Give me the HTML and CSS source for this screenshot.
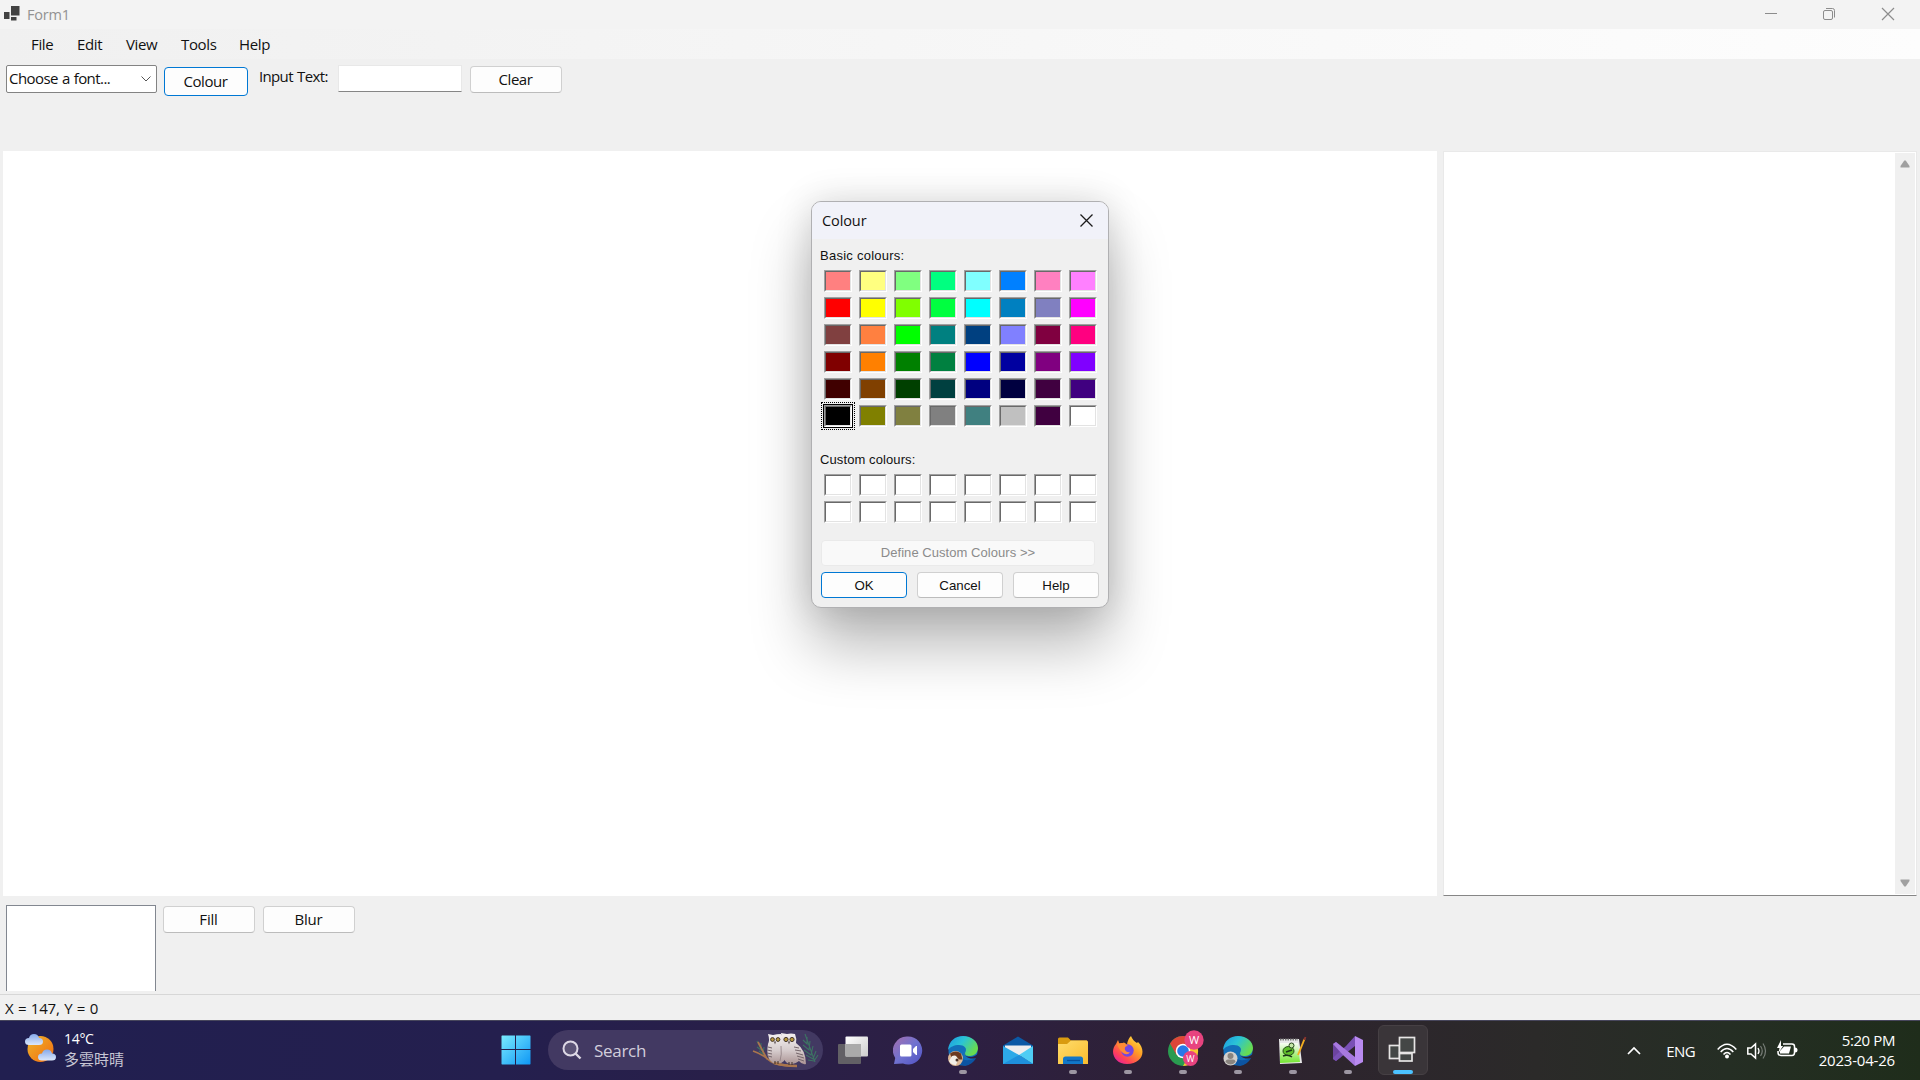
FILE: index.html
```html
<!DOCTYPE html>
<html lang="en">
<head>
<meta charset="utf-8">
<title>Form1</title>
<link rel="stylesheet" href="styles.css">
</head>
<body>
<div class="window">
  <header class="titlebar">
    <svg class="app-icon" width="16" height="17" viewBox="0 0 16 17"><g fill="#424242"><rect x="7" y="0" width="8.5" height="9.5"/><rect x="0" y="6" width="5.5" height="7"/><rect x="7" y="11" width="5.5" height="3.5"/></g></svg>
    <span class="title">Form1</span>
    <div class="caption-buttons">
      <svg width="58" height="29" viewBox="0 0 58 29"><path d="M23 13.5h12" stroke="#8c8c8c"/></svg>
      <svg width="58" height="29" viewBox="0 0 58 29"><g fill="none" stroke="#8c8c8c"><rect x="23.5" y="10.5" width="9" height="9" rx="1.5"/><path d="M26 8.5h6.500q2 0 2 2v7"/></g></svg>
      <svg width="60" height="29" viewBox="0 0 60 29"><path d="M24 8l12 12M36 8l-12 12" stroke="#8c8c8c" stroke-width="1.2"/></svg>
    </div>
  </header>
  <nav class="menubar"><span>File</span><span>Edit</span><span>View</span><span>Tools</span><span>Help</span></nav>
  <section class="toolbar">
    <div class="combo"><span>Choose a font...</span><svg width="10" height="6" viewBox="0 0 10 6"><path d="M.5.5 5 5 9.500.5" fill="none" stroke="#555"/></svg></div>
    <button class="btn focus colour-btn">Colour</button>
    <label class="input-label">Input Text:</label>
    <div class="text-input"></div>
    <button class="btn clear-btn">Clear</button>
  </section>
  <main class="work">
    <div class="canvas"></div>
    <div class="output">
      <div class="scrollbar">
        <svg width="10" height="8" viewBox="0 0 10 8"><path d="M4.300.5h1.400L9.500 6v1.500h-9V6z" fill="#a0a0a0"/></svg>
        <svg width="10" height="8" viewBox="0 0 10 8"><path d="M.5.500h9V2L5.700 7.500H4.300L.5 2z" fill="#a0a0a0"/></svg>
      </div>
    </div>
  </main>
  <section class="bottom">
    <div class="preview"></div>
    <button class="btn">Fill</button>
    <button class="btn">Blur</button>
  </section>
  <footer class="status"><span>X = 147, Y = 0</span></footer>
</div>

<div class="taskbar">
  <div class="weather">
    <svg width="31" height="30" viewBox="0 0 31 30"><defs><linearGradient id="sun" x1="0" y1="0" x2="1" y2="1"><stop stop-color="#eeb62b"/><stop offset="1" stop-color="#f26a10"/></linearGradient><linearGradient id="cl" x2="0" y2="1"><stop stop-color="#86a9ea"/><stop offset="1" stop-color="#dce8fb"/></linearGradient></defs><circle cx="15.500" cy="16" r="13" fill="url(#sun)"/><path d="M4 12q-4 0-4-3.500Q0 5 4 5 5 1 9 1t5 4q4 0 4 3.500T14 12z" fill="url(#cl)"/><path transform="translate(13 15.500)" d="M4 12q-4 0-4-3.500Q0 5 4 5 5 1 9 1t5 4q4 0 4 3.500T14 12z" fill="url(#cl)"/></svg>
    <div class="weather-text"><span class="temp">14°C</span><span class="cond">多雲時晴</span></div>
  </div>
  <div class="apps">
    <svg class="start" width="30" height="30" viewBox="0 0 30 30"><defs><linearGradient id="win" gradientUnits="userSpaceOnUse" x2="29" y2="29"><stop stop-color="#7cecff"/><stop offset="1" stop-color="#1098f5"/></linearGradient></defs><path fill="url(#win)" d="M1 .5h13V14H.5V1zM15 .5h14l.5.500V14H15zM.5 15H14v14.500H1L.5 29zM15 15h14.500v14l-.5.500H15z"/></svg>
    <div class="search">
      <svg width="20" height="20" viewBox="0 0 20 20"><circle cx="8.500" cy="8.500" r="7" fill="#ffffff22" stroke="#ddd8e5" stroke-width="2"/><path d="M13.500 13.500l5 5" stroke="#ddd8e5" stroke-width="2.400"/></svg>
      <span>Search</span>
      <svg class="owls" width="68" height="36" viewBox="0 0 68 36">
        <defs><linearGradient id="owl" x2="0" y2="1"><stop stop-color="#f4f1f1"/><stop offset=".55" stop-color="#d6cccd"/><stop offset="1" stop-color="#ab9494"/></linearGradient></defs>
        <g fill="none" stroke="#3d7263" stroke-width="1.100"><path d="M53 2l10 28M51 8l4 4 0-7M51 13l6 5 1-9M52 18l7 5 2-9M54 23l7 4 3-8M56 28l6 1 4-6M5 9l9 17M5 15l4 3 0-7M7 19l4 3 1-7"/></g>
        <path d="M1 19q9 3 16 9t28 6M6 10l9 17" fill="none" stroke="#a9754d" stroke-width="1.800"/>
        <path d="M16 2l5 1q4-1 8-1l3 5v22q-5 5-11 2-8-5-5-19 2-4 0-10z" fill="url(#owl)"/>
        <path d="M29 1l6 1q4-1 8 0 2 5 1 9 10 7 10 21-4 1-7-3-6 5-12 2-6-5-6-13 2-8 0-17z" fill="url(#owl)"/>
        <path d="M29 14q1 9-1 15" fill="none" stroke="#8d7c80" stroke-width=".8"/>
        <g fill="#b89a3c" stroke="#45362d" stroke-width="1"><circle cx="20.500" cy="7.500" r="1.900"/><circle cx="26" cy="7.500" r="1.900"/><circle cx="34" cy="7.500" r="2.100"/><circle cx="40" cy="7.500" r="2.100"/></g>
        <path d="M22 9.500h2l-1 3zM36 9.500h2l-1 3z" fill="#4c4043"/>
        <path d="M16 15l4 1M15 18l5 1M15 21l5 1M16 24l4 1M42 15l5 1M43 18l6 1M44 21l7 2M45 24l7 2M46 27l6 2" stroke="#75666b" stroke-width="1"/>
        <path d="M22 31q10 3 23 3" stroke="#a9754d" stroke-width="2.600" fill="none"/>
        <path d="M23 29v3M26 29v3M37 30v3M40 30v3" stroke="#3e302c"/>
      </svg>
    </div>
    <div class="app"><svg width="30" height="30" viewBox="0 0 30 30"><defs><linearGradient id="tv" x2="1" y2="1"><stop stop-color="#fff"/><stop offset="1" stop-color="#ccc"/></linearGradient></defs><rect y="8" width="23" height="20" rx="1" fill="#626065"/><rect x="7.500" y=".5" width="22.500" height="20" rx="1" fill="url(#tv)"/><path d="M7.500 8H23v12.500H7.500z" fill="#aaa"/></svg></div>
    <div class="app"><svg width="30" height="30" viewBox="0 0 30 30"><defs><linearGradient id="chat" x2="1" y2="1"><stop stop-color="#a66eac"/><stop offset=".5" stop-color="#7072d0"/><stop offset="1" stop-color="#4f50c2"/></linearGradient></defs><path d="M15 .5a14 14 0 1 1-5 27L1 28l1.200-6A14 14 0 0 1 15 .5z" fill="url(#chat)"/><rect x="7" y="8.500" width="11.500" height="12" rx="1.500" fill="#fff"/><path d="M20 13l3-3h1v9h-1l-3-3z" fill="#fff"/></svg></div>
    <div class="app run"><svg width="30" height="30" viewBox="0 0 30 30"><defs><linearGradient id="eg" x2="1" y2=".5"><stop stop-color="#1b96e3"/><stop offset=".5" stop-color="#2bc4d5"/><stop offset="1" stop-color="#68dc50"/></linearGradient></defs><circle cx="15" cy="15" r="14.500" fill="#136fba"/><path d="M0 14C1 5 7 0 15 0c9 0 15 6 15 12 0 5-4 8-8 8-4 0-6-1-5-3 3-5-1-8-6-8-5 0-9 2-11 5z" fill="url(#eg)"/><path d="M10 15c0 8 7 12 18 7-2 4-6 7-11 8-8-2-12-9-7-15z" fill="#0c54a2"/><path d="M17 17q-1 4 6 4 3 0 8-4v5l-3 0q-4 1-7 0-4-1-4-5z" fill="#2d1f43"/><circle cx="7.500" cy="22.500" r="7.500" fill="#dcb795"/><path d="M2 17.500q6-4 11 0l1.500 6-3 0-4-3-4 1z" fill="#6b3a20"/><path d="M4 20q5-2 6 4l-2 5q-5 0-7-4z" fill="#f2eee7"/><circle cx="9" cy="24" r="1.500" fill="#4d3328"/></svg></div>
    <div class="app"><svg width="30" height="30" viewBox="0 0 30 30"><path d="M0 9.500L15 .5l15 9v6H0z" fill="#0b59a5"/><path d="M2 9.500h26v10H2z" fill="#eee"/><path d="M0 10l16 9L30 28H0z" fill="#2daae8"/><path d="M30 10L16 19l14 9z" fill="#4fcdf4"/><path d="M0 28l16-9 14 9z" fill="#1f90dc"/></svg></div>
    <div class="app run"><svg width="30" height="30" viewBox="0 0 30 30"><defs><linearGradient id="fold" x2="1" y2="1"><stop stop-color="#ffdc6c"/><stop offset="1" stop-color="#f9bc2e"/></linearGradient></defs><path d="M0 3q0-1.500 1.500-1.500H10l3 3h16V16H0z" fill="#d99b10"/><path d="M0 8h9l4-3.500h15.500Q30 4.500 30 6v22H0z" fill="url(#fold)"/><path d="M5 28v-5q0-2.500 2.500-2.500h15Q25 20.500 25 23v5z" fill="#1277c8"/><path d="M9 24.500h13" stroke="#07509b" stroke-width="1.300"/></svg></div>
    <div class="app run"><svg width="30" height="30" viewBox="0 0 30 30"><defs><linearGradient id="fx" x1="1" y1="0" x2=".2" y2="1"><stop stop-color="#fff14c"/><stop offset=".45" stop-color="#ff9b25"/><stop offset=".8" stop-color="#ff405a"/><stop offset="1" stop-color="#e4239b"/></linearGradient></defs><path d="M5 4l1.500 4L11 6.500l3 2q1-6 4-8.500 2 5 6 7l1-1c9 9 4 22-11 22C2 28-4 16 3 8z" fill="url(#fx)"/><circle cx="14.500" cy="14.500" r="6.200" fill="#7446e0"/><path d="M4 8q7-3 11 2-4 0-3 4 2 3 5 2-2 4-7 1-4-3-6-9z" fill="#ff8a36"/></svg></div>
    <div class="app run"><svg class="wide" width="36" height="36" viewBox="0 0 36 36"><circle cx="15" cy="21" r="15" fill="#2a9b50"/><path d="M2 13.500A15 15 0 0 1 28 13.500L15 14.500 8.500 25z" fill="#de4638"/><path d="M28 13.500A15 15 0 0 1 15 36l6.500-11L20 14z" fill="#f9c82e"/><circle cx="15" cy="21" r="7.300" fill="#fff"/><circle cx="15" cy="21" r="5.800" fill="#2878e8"/><circle cx="26" cy="10" r="9.700" fill="#e8437f"/><circle cx="22.500" cy="28.500" r="7.500" fill="#e8437f"/><text x="26" y="14" font-size="11" text-anchor="middle" fill="#fff">W</text><text x="22.500" y="32" font-size="9" text-anchor="middle" fill="#fff">W</text></svg></div>
    <div class="app run"><svg width="30" height="30" viewBox="0 0 30 30"><circle cx="15" cy="15" r="14.500" fill="#136fba"/><path d="M0 14C1 5 7 0 15 0c9 0 15 6 15 12 0 5-4 8-8 8-4 0-6-1-5-3 3-5-1-8-6-8-5 0-9 2-11 5z" fill="url(#eg)"/><path d="M10 15c0 8 7 12 18 7-2 4-6 7-11 8-8-2-12-9-7-15z" fill="#0c54a2"/><path d="M17 17q-1 4 6 4 3 0 8-4v5l-3 0q-4 1-7 0-4-1-4-5z" fill="#2f2332"/><circle cx="7.500" cy="22.500" r="7" fill="#d1cfcd"/><circle cx="7.500" cy="20" r="3" fill="#89847f"/><path d="M2.500 26q0-2.500 2.500-2.500h5q2.500 0 2.500 2.500-5 5-10 0z" fill="#89847f"/></svg></div>
    <div class="app run"><svg width="30" height="30" viewBox="0 0 30 30"><defs><linearGradient id="np" x2="0" y2="1"><stop stop-color="#f9fff4"/><stop offset="1" stop-color="#72e52f"/></linearGradient></defs><path d="M1 3h20l3 24-22 1z" fill="#e8e8e8"/><path d="M2 7h18l2 19-20 1z" fill="url(#np)"/><path d="M2 3.500h18" stroke="#777" stroke-width="2" stroke-dasharray="1.500 1"/><ellipse cx="10.500" cy="15" rx="5.500" ry="4.500" fill="#61be2c" stroke="#204a17"/><circle cx="13.500" cy="9.500" r="2.500" fill="#c5e8a8" stroke="#26451c"/><path d="M5 20q5-2 9 1M8 16l6-2" stroke="#1c3518" stroke-width="1.500" fill="none"/><path d="M20 19L26.500 3" stroke="#f3ae20" stroke-width="1.900"/><path d="M26.300 4l1.200-3" stroke="#8c3530" stroke-width="1.900"/></svg></div>
    <div class="app run"><svg width="30" height="30" viewBox="0 0 30 30"><path d="M0 8l3-2 5 4v11l-5 4-3-2z" fill="#6c44a0"/><path d="M22 0l-9 10-9 8-4 4v1l3 2 9-7 10-8z" fill="#7950b5"/><path d="M0 8l3-2 19 15v9L10 19z" fill="#a779df"/><path d="M22 0l8 4v22l-8 4z" fill="#b98af0"/></svg></div>
    <div class="app run active"><svg width="30" height="30" viewBox="0 0 30 30"><g fill="#444746" stroke="#e7e5e5" stroke-width="1.700"><rect x="1.500" y="9.500" width="10" height="13"/><rect x="11.500" y="17.500" width="12.500" height="7.500"/><rect x="11.500" y="1.500" width="15" height="15"/></g></svg></div>
  </div>
  <div class="tray">
    <svg width="14" height="9" viewBox="0 0 14 9"><path d="M1 8l6-6 6 6" fill="none" stroke="#fff" stroke-width="1.700"/></svg>
    <span class="lang">ENG</span>
    <svg width="20" height="16" viewBox="0 0 20 16"><g fill="none" stroke="#fff" stroke-width="1.500"><path d="M.7 6.500q9.300-10.500 18.600 0M3.700 9q6.300-7 12.600 0M6.500 11.500q3.500-4 7 0"/></g><circle cx="10" cy="13.500" r="2" fill="#fff"/></svg>
    <svg class="vol" width="20" height="18" viewBox="0 0 20 18"><path d="M.8 6H4l4.500-4v14L4 12H.8z" fill="none" stroke="#fff" stroke-width="1.500"/><path d="M11 6q2 3 0 6" fill="none" stroke="#fff" stroke-width="1.300"/><path d="M13.500 4q3.500 5 0 10M16 1.500q5 7.500 0 15" fill="none" stroke="#777d77" stroke-width="1.200"/></svg>
    <svg class="bat" width="21" height="18" viewBox="0 0 21 18"><path d="M6 4h9q2.500 0 2.500 2.500v6Q17.500 15.500 15 15.500H4q-3 0-3-3V11" fill="none" stroke="#fff" stroke-width="1.500"/><path d="M7 6.500h7L12 13.500H3V11zM18 7.500q2.500 0 2.500 2.500t-2.500 2.500zM4 0L0 8h2.500L1.500 13 6 6H4z" fill="#fff"/></svg>
    <div class="clock"><span>5:20 PM</span><span class="date">2023-04-26</span></div>
  </div>
</div>

<div class="dialog">
  <div class="dialog-title"><span>Colour</span><svg width="13" height="13" viewBox="0 0 13 13"><path d="M.5.500l12 12M12.500.5l-12 12" stroke="#1b1b1b" stroke-width="1.300"/></svg></div>
  <div class="dialog-body">
    <div class="group-label">Basic colours:</div>
    <div class="swatches" id="basic"></div>
    <div class="group-label custom-label">Custom colours:</div>
    <div class="swatches" id="custom"></div>
    <button class="btn define" disabled><span>Define Custom Colours &gt;&gt;</span></button>
    <div class="actions"><button class="btn focus">OK</button><button class="btn">Cancel</button><button class="btn">Help</button></div>
  </div>
</div>
<script src="palette.js"></script>
</body>
</html>
```
FILE: styles.css
```css
* { box-sizing: border-box; }
body { margin: 0; width: 1920px; height: 1080px; overflow: hidden; display: flex; flex-direction: column; font: 15px/20px "Open Sans", "Noto Sans", sans-serif; color: #111; background: #f0f0f0; }
svg { display: block; flex: none; }
span, label { white-space: nowrap; }
.window { height: 1020px; display: flex; flex-direction: column; }

.titlebar { height: 29px; flex: none; display: flex; align-items: flex-start; background: #f3f3f3; padding-left: 4px; }
.app-icon { margin-top: 6px; }
.title { margin: 5px 0 0 7px; color: #929292; font-size: 14.5px; letter-spacing: -.2px; }
.caption-buttons { margin-left: auto; padding-right: 2px; display: flex; }

.menubar { height: 30px; flex: none; display: grid; grid-template-columns: 46px 49px 55px 58px auto; align-items: center; padding: 0 0 1px 31px; letter-spacing: -.35px; background: linear-gradient(90deg, #f0f0f0, #fdfdfd); }

.toolbar { height: 92px; flex: none; display: flex; align-items: flex-start; padding: 6px 0 0 6px; letter-spacing: -.45px; }
.combo { width: 151px; height: 28px; display: flex; align-items: center; justify-content: space-between; padding: 0 5px 2px 2px; background: #fff; border: 1px solid #838383; border-radius: 2px; }
.combo span { word-spacing: .6px; letter-spacing: -.55px; }
.combo svg { margin-top: 2px; }
.btn { width: 92px; height: 27px; padding: 0 1px 2px 0; font: inherit; letter-spacing: inherit; color: #111; background: #fdfdfd; border: 1px solid #d0d0d0; border-bottom-color: #bcbcbc; border-radius: 4px; }
.btn.focus { border-color: #0078d4; }
.colour-btn { width: 84px; height: 29px; margin: 2px 0 0 7px; }
.input-label { margin: 1px 0 0 11px; width: 79px; letter-spacing: -.65px; word-spacing: 1px; }
.text-input { width: 124px; height: 27px; background: #fff; border: 1px solid #e8e8e8; border-bottom-color: #868686; }
.clear-btn { margin: 1px 0 0 8px; }

.work { height: 745px; flex: none; display: flex; padding-left: 3px; gap: 6px; }
.canvas { width: 1434px; background: #fff; }
.output { width: 474px; background: #fff; border: 1px solid #e9e9e9; border-bottom-color: #868686; display: flex; justify-content: flex-end; padding: 1px 1px 1px 0; }
.scrollbar { width: 20px; background: #f0f0f0; display: flex; flex-direction: column; align-items: center; justify-content: space-between; padding: 7px 1px 7px 0; }

.bottom { height: 98px; flex: none; display: flex; padding: 9px 0 0 6px; letter-spacing: -.2px; }
.bottom .btn { margin: 1px 0 0 8px; }
.preview { width: 150px; height: 86px; background: #fff; border: 1px solid #828790; border-bottom: 0; }
.bottom .preview + .btn { margin-left: 7px; }
.status { flex: 1; border-top: 1px solid #d7d7d7; padding: 3px 0 0 5px; }
.status span { letter-spacing: -.2px; word-spacing: .8px; }

.taskbar { position: relative; height: 60px; border-top: 1px solid #47465c; color: #fff; display: flex; background: linear-gradient(90deg, #211f50 0, #241f4e 26%, #2d1f43 50%, #2e2230 64%, #2b2a29 80%, #252e24 90%, #1f2d1b 100%); }
.weather { width: 501px; padding: 12px 0 0 25px; display: flex; gap: 8px; }
.weather-text { display: flex; flex-direction: column; margin-top: -4px; line-height: 20px; }
.temp { font-size: 14px; letter-spacing: -.3px; }
.cond { font: 15px/20px "Noto Sans CJK TC", sans-serif; color: #c7c6d4; }
.apps { display: flex; align-items: flex-start; }
.start { margin: 14px 18px 0 0; }
.search { width: 275px; height: 40px; margin: 9px 5px 0 -1px; border-radius: 20px; background: #423962; display: flex; align-items: center; padding-left: 14px; font-size: 17px; color: #d2cedc; }
.search span { margin: 1px 0 0 12px; letter-spacing: -.3px; }
.owls { margin-left: auto; margin-right: 3px; }
.app { position: relative; width: 50px; height: 50px; margin: 4px 5px 0 0; display: flex; justify-content: center; padding-top: 11px; border-radius: 6px; }
.app .wide { margin: -6px 0 0 6px; }
.run::after { content: ""; position: absolute; left: 21px; bottom: 1px; width: 8px; height: 4px; border-radius: 2px; background: #9c96a2; }
.active { background: #3a3539; border: 1px solid #464044; padding-top: 10px; }
.active::after { left: 14px; width: 20px; bottom: 0; background: #4cc2ff; }
.tray { margin-left: auto; padding-right: 25px; display: flex; align-items: center; }
.lang { margin: 0 22px 0 25px; font-size: 15px; letter-spacing: -.6px; }
.vol { margin: 0 10px; }
.bat { margin-top: -4px; }
.clock { width: 97px; margin-top: -2px; display: flex; flex-direction: column; text-align: right; font-size: 15px; line-height: 20px; letter-spacing: -.4px; }
.date { letter-spacing: -.2px; }

.dialog { position: absolute; left: 811px; top: 201px; width: 298px; height: 407px; background: #f0f0f0; border: 1px solid #b0b0b2; border-radius: 10px; box-shadow: 0 38px 60px rgba(0,0,0,.28), 0 0 36px rgba(0,0,0,.14); overflow: hidden; font-family: "Liberation Sans", Arial, sans-serif; font-size: 13px; line-height: 16px; }
.dialog-title { height: 37px; background: #f1f2f9; display: flex; justify-content: space-between; align-items: center; padding: 0 15px 1px 10px; font: 14.500px/20px "Open Sans", sans-serif; letter-spacing: -.1px; }
.dialog-title span { margin-top: 1px; }
.dialog-body { padding: 9px 0 0 8px; display: flex; flex-direction: column; align-items: flex-start; }
.group-label { height: 22px; letter-spacing: .25px; }
.swatches { display: grid; grid-template-columns: repeat(8, 28px); grid-auto-rows: 22px; gap: 5px 7px; margin-left: 4px; }
.swatch { border: 1px solid #a0a0a0; border-right-color: #fff; border-bottom-color: #fff; }
.swatch i { display: block; height: 100%; border: 1px solid #696969; border-right-color: #e3e3e3; border-bottom-color: #e3e3e3; }
.swatch.selected { box-shadow: 0 0 0 1px #000; outline: 1px dotted #000; outline-offset: 2px; }
.custom-label { margin-top: 25px; letter-spacing: .1px; }
.define { width: 274px; height: 26px; padding: 0; margin: 17px 0 0 1px; background: #f9f9f9; border-color: #eaeaea; color: #8b8b8b; letter-spacing: .05px; }
.actions { display: flex; gap: 10px; margin: 6px 0 0 1px; }
.actions .btn { width: 86px; height: 26px; padding: 1px 0 0; font-size: 13.300px; }
```
FILE: palette.js
```js
const basic = [
  "ff8080 ffff80 80ff80 00ff80 80ffff 0080ff ff80c0 ff80ff",
  "ff0000 ffff00 80ff00 00ff40 00ffff 0080c0 8080c0 ff00ff",
  "804040 ff8040 00ff00 008080 004080 8080ff 800040 ff0080",
  "800000 ff8000 008000 008040 0000ff 0000a0 800080 8000ff",
  "400000 804000 004000 004040 000080 000040 400040 400080",
  "000000 808000 808040 808080 408080 c0c0c0 400040 ffffff"
].join(" ").split(" ");
function fill(id, colours, selected) {
  document.getElementById(id).innerHTML = colours.map((c, i) =>
    `<div class="swatch${i === selected ? " selected" : ""}"><i style="background:#${c}"></i></div>`).join("");
}
fill("basic", basic, 40);
fill("custom", Array(16).fill("ffffff"), -1);
```
